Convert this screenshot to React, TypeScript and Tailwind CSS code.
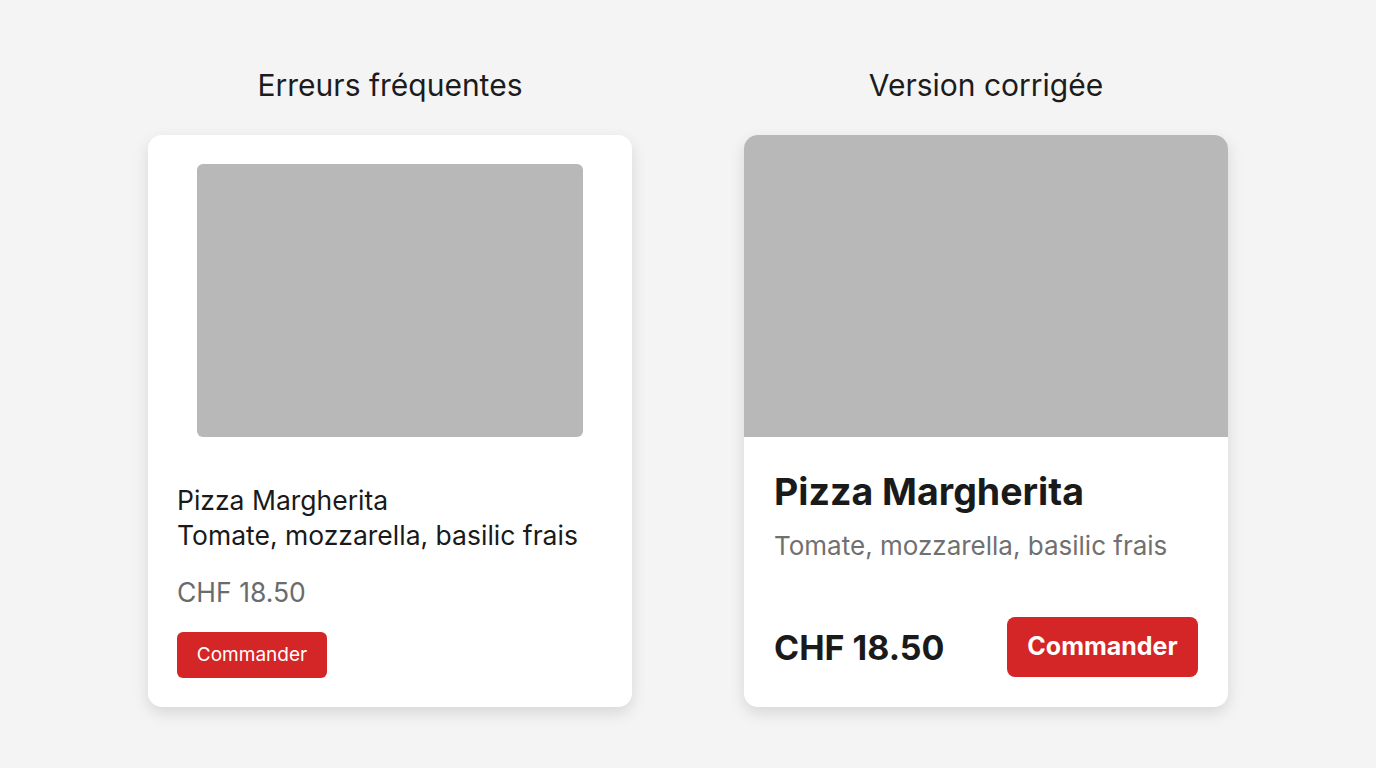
import React from 'react';

const font = { fontFamily: 'Inter, "Noto Sans", sans-serif' };

const App: React.FC = () => {
  return (
    <div className="min-h-[768px] w-full bg-[#f4f4f5] flex justify-center pt-[64px]" style={font}>
      <div className="flex gap-[112px]">
        {/* wrong version */}
        <div className="w-[484px] flex flex-col items-center">
          <h2 className="text-[30px] leading-[42px] text-[#1c1c1c] mb-[29px]">Erreurs fréquentes</h2>
          <div className="w-full h-[572px] bg-white rounded-[14px] shadow-[0_6px_16px_rgba(0,0,0,0.12)] flex flex-col">
            <div className="px-[49px] pt-[29px]">
              <div className="h-[273px] bg-[#b8b8b8] rounded-[6px]" />
            </div>
            <div className="px-[29px] pt-[46px]">
              <p className="text-[26.5px] leading-[35px] text-[#1a1a1a]">Pizza Margherita</p>
              <p className="text-[26.5px] leading-[35px] text-[#1a1a1a]">Tomate, mozzarella, basilic frais</p>
              <p className="text-[26.5px] leading-[36px] text-[#6b6b6b] mt-[21px]">CHF 18.50</p>
              <button className="mt-[22px] h-[46px] w-[150px] rounded-[6px] bg-[#d42626] text-white text-[19px]">Commander</button>
            </div>
          </div>
        </div>

        {/* corrected version */}
        <div className="w-[484px] flex flex-col items-center">
          <h2 className="text-[30px] leading-[42px] text-[#1c1c1c] mb-[29px]">Version corrigée</h2>
          <div className="w-full h-[572px] bg-white rounded-[14px] shadow-[0_6px_16px_rgba(0,0,0,0.12)] flex flex-col overflow-hidden">
            <div className="h-[302px] bg-[#b8b8b8]" />
            <div className="flex-1 px-[30px] pt-[32px] pb-[30px] flex flex-col">
              <p className="text-[37.5px] leading-[46px] font-bold text-[#1a1a1a]">Pizza Margherita</p>
              <p className="text-[26px] leading-[34px] text-[#707070] mt-[14px]">Tomate, mozzarella, basilic frais</p>
              <div className="mt-auto flex items-center justify-between">
                <span className="text-[34px] font-bold text-[#1a1a1a]">CHF 18.50</span>
                <button className="h-[60px] w-[191px] rounded-[8px] bg-[#d42626] text-white text-[25px] font-bold">Commander</button>
              </div>
            </div>
          </div>
        </div>
      </div>
    </div>
  );
};

export default App;
